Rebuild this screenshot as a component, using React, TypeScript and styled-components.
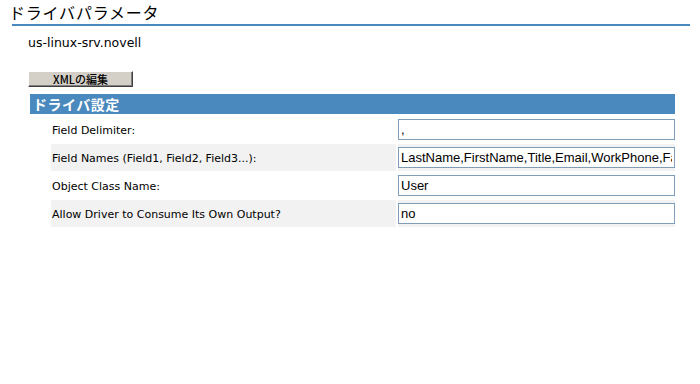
import React from 'react';
import styled, { createGlobalStyle } from 'styled-components';

const GlobalStyle = createGlobalStyle`
    body {
        margin: 0;
        background: #ffffff;
        font-family: "DejaVu Sans", Verdana, "Noto Sans CJK JP", sans-serif;
        color: #000;
    }
`

const rows = [
    { label: 'Field Delimiter:', value: ',' },
    { label: 'Field Names (Field1, Field2, Field3...):', value: 'LastName,FirstName,Title,Email,WorkPhone,FaxNumber' },
    { label: 'Object Class Name:', value: 'User' },
    { label: 'Allow Driver to Consume Its Own Output?', value: 'no' },
];

const App = () => {
    return (
        <Page>
            <GlobalStyle />
            <TitleBar>
                <TitleText>ドライバパラメータ</TitleText>
            </TitleBar>
            <ServerName>us-linux-srv.novell</ServerName>
            <EditButton>XMLの編集</EditButton>
            <SectionHeader>ドライバ設定</SectionHeader>
            <ParamTable>
                {rows.map((row, i) => (
                    <ParamRow key={row.label} $shaded={i % 2 === 1}>
                        <LabelCell>{row.label}</LabelCell>
                        <InputCell>
                            <TextBox readOnly value={row.value} />
                        </InputCell>
                    </ParamRow>
                ))}
            </ParamTable>
        </Page>
    )
}

const Page = styled.div`
    width: 700px;
    height: 384px;
    display: flex;
    flex-direction: column;
    align-items: flex-start;
`

const TitleBar = styled.div`
    margin-left: 12px;
    width: 678px;
    height: 24px;
    border-bottom: 2px solid #4a89bd;
    display: flex;
    align-items: center;
`

const TitleText = styled.div`
    margin-left: -3px;
    margin-top: -1px;
    font-family: "Noto Sans CJK JP", sans-serif;
    font-size: 16px;
    line-height: 18px;
    letter-spacing: 0.8px;
`

const ServerName = styled.div`
    margin: 9px 0 0 28px;
    font-size: 12.5px;
    line-height: 16px;
`

const EditButton = styled.button`
    margin: 20px 0 0 28px;
    width: 105px;
    height: 16px;
    padding: 0;
    background: #d4d0c8;
    border: 1px solid;
    border-color: #ffffff #404040 #404040 #ffffff;
    box-shadow: inset -1px -1px 0 #808080;
    font-family: "Noto Sans CJK JP", sans-serif;
    font-size: 11px;
    font-weight: 500;
    line-height: 13px;
    color: #000;
`

const SectionHeader = styled.div`
    margin: 7px 0 0 30px;
    width: 642px;
    height: 20px;
    padding-left: 3px;
    background: #4a89bd;
    color: #ffffff;
    font-family: "Noto Sans CJK JP", sans-serif;
    font-weight: bold;
    font-size: 14px;
    line-height: 20px;
    letter-spacing: 0.5px;
`

const ParamTable = styled.div`
    margin: 2px 0 0 51px;
    width: 624px;
    display: flex;
    flex-direction: column;
    gap: 1px;
`

const ParamRow = styled.div<{ $shaded: boolean }>`
    display: grid;
    grid-template-columns: 345px 1fr;
    column-gap: 2px;
    height: 27px;
    & > div {
        background: ${p => p.$shaded ? '#f2f2f2' : '#ffffff'};
    }
`

const LabelCell = styled.div`
    display: flex;
    align-items: center;
    padding: 2px 0 0 1px;
    font-size: 11px;
`

const InputCell = styled.div`
    display: flex;
    align-items: center;
`

const TextBox = styled.input`
    box-sizing: border-box;
    width: 277px;
    height: 21px;
    padding: 0 2px;
    border: 1px solid #7f9db9;
    background: #fff;
    font-family: "Liberation Sans", Arial, sans-serif;
    font-size: 13px;
    color: #000;
    outline: none;
`

export default App;
